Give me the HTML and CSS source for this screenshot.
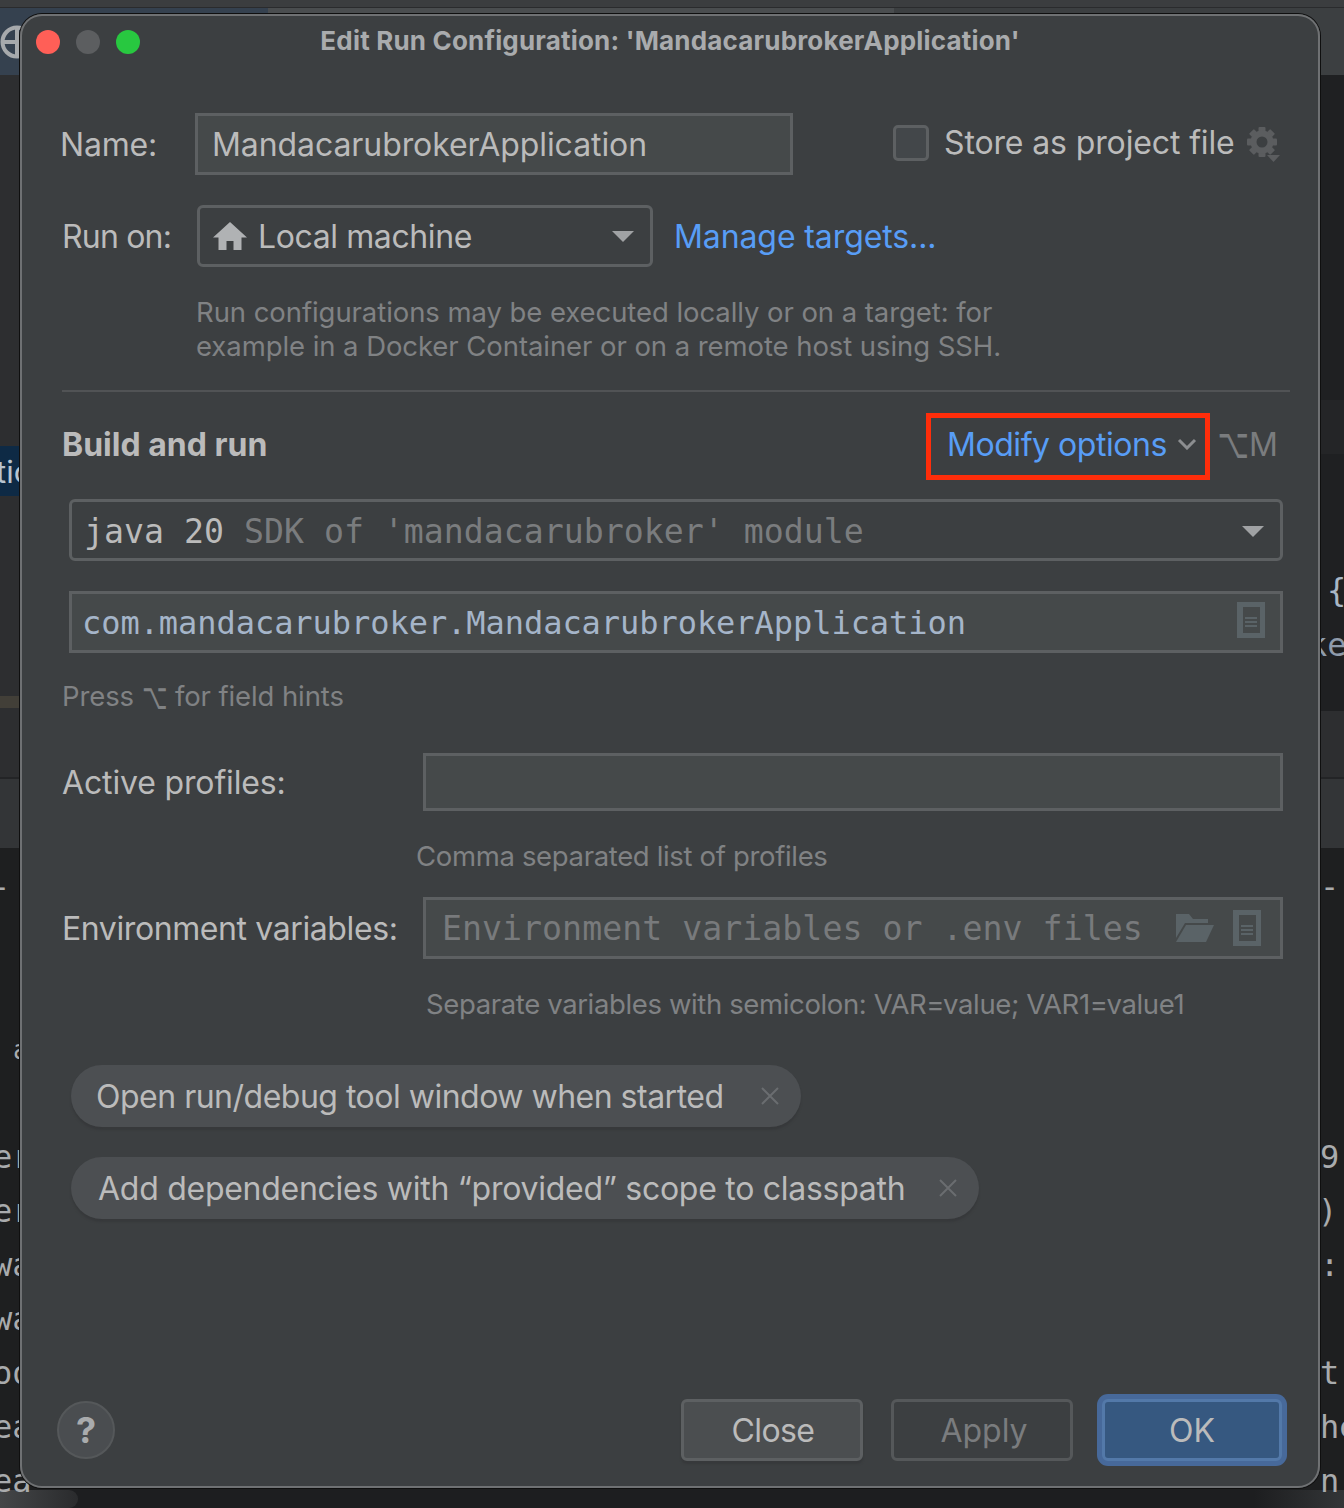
FILE: index.html
```html
<!DOCTYPE html>
<html>
<head>
  <meta charset="utf-8">
  <title>Edit Run Configuration</title>
  <link rel="stylesheet" href="styles.css">
</head>
<body>
  <!-- IDE window behind the dialog -->
  <div class="ide">
    <div class="band band-top"></div>
    <div class="band band-tabs">
      <div class="tab-active"></div>
      <div class="tab-next"></div>
    </div>
    <div class="band band-tree">
      <div class="side-left">
        <div class="tree-selected"></div>
        <div class="tree-warn"></div>
      </div>
      <div class="side-right">
        <div class="gutter-line"></div>
      </div>
    </div>
    <div class="band band-panel"></div>
    <div class="band band-console"></div>
    <div class="band band-bottom">
      <div class="scroll-left"></div>
      <div class="scroll-right"></div>
    </div>
    <svg class="globe" width="34" height="34" viewBox="0 0 34 34">
      <circle cx="17" cy="17" r="14.5" fill="none" stroke="#a6a9ac" stroke-width="4"/>
      <path d="M17 3v28M3 17h28" stroke="#a6a9ac" stroke-width="4"/>
    </svg>
    <span class="frag frag-ti">tic</span>
    <span class="frag frag-dash-l">-</span>
    <span class="frag frag-a">a</span>
    <span class="frag frag-e1">er</span>
    <span class="frag frag-e2">er</span>
    <span class="frag frag-w1">wa</span>
    <span class="frag frag-w2">wa</span>
    <span class="frag frag-o">oo</span>
    <span class="frag frag-e3">ea</span>
    <span class="frag frag-e4">ea</span>
    <span class="frag frag-brace">{</span>
    <span class="frag frag-ke">ke</span>
    <span class="frag frag-dash-r">-</span>
    <span class="frag frag-9">9</span>
    <span class="frag frag-paren">)</span>
    <span class="frag frag-colon">:r</span>
    <span class="frag frag-t">t</span>
    <span class="frag frag-h">he</span>
    <span class="frag frag-n">n</span>
  </div>

  <div class="dialog">
    <div class="titlebar">
      <div class="lights">
        <span class="light light-red"></span>
        <span class="light light-grey"></span>
        <span class="light light-green"></span>
      </div>
      <div class="title">Edit Run Configuration: 'MandacarubrokerApplication'</div>
    </div>

    <div class="row row-name">
      <label class="label label-name">Name:</label>
      <div class="field field-name">MandacarubrokerApplication</div>
      <span class="checkbox"></span>
      <span class="store-text">Store as project file</span>
      <svg class="gear" width="36" height="38" viewBox="0 0 36 38">
        <g fill="#5b5d5f">
          <rect x="12.5" y="1" width="7" height="30" rx="1"/>
          <rect x="12.5" y="1" width="7" height="30" rx="1" transform="rotate(45 16 16)"/>
          <rect x="12.5" y="1" width="7" height="30" rx="1" transform="rotate(90 16 16)"/>
          <rect x="12.5" y="1" width="7" height="30" rx="1" transform="rotate(135 16 16)"/>
          <circle cx="16" cy="16" r="11.5"/>
          <path d="M21 29h13l-6.500 7z"/>
        </g>
        <circle cx="16" cy="16" r="5.500" fill="#3c3f41"/>
      </svg>
    </div>

    <div class="row row-run">
      <label class="label label-run">Run on:</label>
      <div class="combo combo-run">
        <svg class="house" width="34" height="30" viewBox="0 0 34 30">
          <path d="M17 1L34 16.500H28.500V29H20.500V20H13.500V29H5.500V16.500H0z" fill="#b0b2b4"/>
        </svg>
        <span class="combo-text">Local machine</span>
        <span class="caret"></span>
      </div>
      <a class="link manage-link">Manage targets...</a>
    </div>

    <div class="hint hint-run">Run configurations may be executed locally or on a target: for<br>example in a Docker Container or on a remote host using SSH.</div>

    <div class="divider"></div>

    <div class="row row-build">
      <div class="section-title">Build and run</div>
      <div class="modify-box">
        <a class="link modify-link">Modify options</a>
        <svg class="chevron" width="20" height="12" viewBox="0 0 20 12">
          <path d="M2 2l8 8 8-8" fill="none" stroke="#8c8e90" stroke-width="3"/>
        </svg>
      </div>
      <span class="shortcut"><span class="opt">⌥</span>M</span>
    </div>

    <div class="combo combo-jdk mono">
      <span class="jdk-name">java 20</span>&nbsp;<span class="jdk-rest">SDK of 'mandacarubroker' module</span>
      <span class="caret"></span>
    </div>

    <div class="field field-main mono">
      <span>com.mandacarubroker.MandacarubrokerApplication</span>
      <svg class="doc" width="28" height="36" viewBox="0 0 28 36">
        <path fill-rule="evenodd" d="M0 0h28v36H0zM6 5v26h17V5z" fill="#5a6367"/>
        <path d="M8 15h12v2H8zM8 19h12v2H8zM8 23h12v2H8z" fill="#5a6367"/>
      </svg>
    </div>

    <div class="hint hint-press">Press <span class="opt">⌥</span> for field hints</div>

    <div class="row row-profiles">
      <label class="label label-wide label-profiles">Active profiles:</label>
      <div class="field field-profiles"></div>
    </div>
    <div class="hint hint-comma">Comma separated list of profiles</div>

    <div class="row row-env">
      <label class="label label-wide label-env">Environment variables:</label>
      <div class="field field-env mono">
        <span class="placeholder">Environment variables or .env files</span>
        <svg class="folder" width="38" height="28" viewBox="0 0 38 28">
          <path d="M0 0h13l4 5h15v4H9L0 24z" fill="#5a6367"/>
          <path d="M10 11h28l-8 17H0z" fill="#5a6367"/>
        </svg>
        <svg class="doc" width="28" height="36" viewBox="0 0 28 36">
          <path fill-rule="evenodd" d="M0 0h28v36H0zM6 5v26h17V5z" fill="#5a6367"/>
          <path d="M8 15h12v2H8zM8 19h12v2H8zM8 23h12v2H8z" fill="#5a6367"/>
        </svg>
      </div>
    </div>
    <div class="hint hint-sep">Separate variables with semicolon: VAR=value; VAR1=value1</div>

    <div class="chip chip-open">
      <span>Open run/debug tool window when started</span>
      <svg class="chip-x" width="20" height="20" viewBox="0 0 20 20">
        <path d="M2 2l16 16M18 2L2 18" stroke="#6a6d70" stroke-width="2"/>
      </svg>
    </div>
    <div class="chip chip-deps">
      <span>Add dependencies with “provided” scope to classpath</span>
      <svg class="chip-x" width="20" height="20" viewBox="0 0 20 20">
        <path d="M2 2l16 16M18 2L2 18" stroke="#6a6d70" stroke-width="2"/>
      </svg>
    </div>

    <div class="footer">
      <div class="help">?</div>
      <div class="btn btn-close">Close</div>
      <div class="btn btn-apply">Apply</div>
      <div class="btn btn-ok">OK</div>
    </div>
  </div>
</body>
</html>
```

FILE: styles.css
```css
/* Page */
body {
  margin: 0;
  width: 1344px;
  height: 1508px;
  position: relative;
  overflow: hidden;
  background-color: #1e1f20;
  font-family: Inter, "Noto Sans", sans-serif;
  font-size: 32px;
  color: #bbbbbb;
}

/* IDE behind the dialog */
.ide {
  position: absolute;
  inset: 0;
  display: flex;
  flex-direction: column;
}
.band { position: relative; }
.band-top {
  height: 7px;
  background-color: #3b3d3f;
  border-bottom: 1px solid #2a2b2d;
}
.band-tabs {
  height: 67px;
  display: flex;
  background-color: #3c3f41;
}
.tab-active {
  width: 268px;
  height: 100%;
  background-color: #35414f;
}
.tab-next {
  width: 626px;
  height: 100%;
  background-color: #4a4d4f;
}
.band-tree {
  height: 636px;
  display: flex;
  justify-content: space-between;
  background-color: #1f2022;
}
.side-left {
  width: 20px;
  background-color: #2d2e30;
  padding-top: 371px;
}
.tree-selected {
  height: 50px;
  background-color: #0e2a45;
}
.tree-warn {
  height: 12px;
  margin-top: 200px;
  background-color: #423f38;
}
.side-right { width: 24px; padding-top: 325px; }
.gutter-line {
  height: 54px;
  background-color: #242527;
}
.band-panel {
  height: 137px;
  background-color: #2d2e30;
  background-image: linear-gradient(#2d2e30 66px, #232426 66px, #232426 68px, #333537 68px);
}
.band-console {
  height: 642px;
  background-color: #1e1f20;
}
.band-bottom {
  flex: 1;
  background-color: #1d1e20;
}
.scroll-left {
  position: absolute;
  left: 0;
  top: 0;
  width: 78px;
  height: 100%;
  border-radius: 0 9px 9px 0;
  background-image: linear-gradient(to right, #444648, #2a2b2d);
}
.scroll-right {
  position: absolute;
  right: 0;
  top: 0;
  width: 90px;
  height: 100%;
  background-image: linear-gradient(to right, #1d1e20, #333537);
}
.globe {
  position: absolute;
  left: 0;
  top: 25px;
}
.frag {
  position: absolute;
  font-family: "DejaVu Sans Mono", monospace;
  font-size: 32px;
  line-height: 40px;
  color: #a9abad;
  white-space: nowrap;
}
.frag-ti {
  left: -4px;
  top: 452px;
  font-family: Inter, sans-serif;
  font-size: 31px;
  color: #b9c4cf;
}
.frag-dash-l { left: -9px; top: 867px; }
.frag-a { left: 13px; top: 1030px; font-size: 26px; }
.frag-e1 { left: -7px; top: 1137px; }
.frag-e2 { left: -7px; top: 1191px; }
.frag-w1 { left: -7px; top: 1245px; }
.frag-w2 { left: -7px; top: 1299px; }
.frag-o { left: -7px; top: 1353px; }
.frag-e3 { left: -7px; top: 1407px; }
.frag-e4 { left: -7px; top: 1461px; }
.frag-brace { left: 1327px; top: 570px; color: #a9b7c6; }
.frag-ke { left: 1308px; top: 625px; color: #8f9bab; }
.frag-dash-r { left: 1320px; top: 867px; }
.frag-9 { left: 1320px; top: 1137px; }
.frag-paren { left: 1318px; top: 1191px; }
.frag-colon { left: 1320px; top: 1245px; }
.frag-t { left: 1320px; top: 1353px; }
.frag-h { left: 1320px; top: 1407px; }
.frag-n { left: 1320px; top: 1461px; }

/* Dialog */
.dialog {
  position: absolute;
  left: 20px;
  top: 14px;
  width: 1300px;
  height: 1474px;
  display: flex;
  flex-direction: column;
  border-radius: 22px;
  background-color: #3c3f41;
  box-shadow: inset 0 0 0 2px #6f7173, 0 0 0 1px #0f0f0f;
}
.titlebar {
  height: 56px;
  flex: none;
  display: flex;
  align-items: center;
  justify-content: center;
  position: relative;
}
.lights {
  position: absolute;
  left: 16px;
  top: 16px;
  display: flex;
  gap: 16px;
}
.light {
  width: 24px;
  height: 24px;
  border-radius: 50%;
}
.light-red { background-color: #ff5f57; }
.light-grey { background-color: #5c5e60; }
.light-green { background-color: #28c840; }
.title {
  margin-top: -4px;
  font-size: 26px;
  font-weight: 700;
  letter-spacing: 0.18px;
  color: #a9abad;
}

.row {
  display: flex;
  align-items: center;
  flex: none;
}
.label { flex: none; }
.field {
  box-sizing: border-box;
  border: 3px solid #5d6062;
  background-color: #45494a;
  display: flex;
  align-items: center;
  justify-content: space-between;
}
.combo {
  box-sizing: border-box;
  border: 3px solid #5d6062;
  border-radius: 6px;
  display: flex;
  align-items: center;
}
.caret {
  width: 0;
  height: 0;
  margin-left: auto;
  border-left: 11px solid transparent;
  border-right: 11px solid transparent;
  border-top: 11px solid #a0a2a4;
}
.mono {
  font-family: "DejaVu Sans Mono", monospace;
  font-size: 32px;
  letter-spacing: -0.05px;
  white-space: pre;
}

/* Name row */
.row-name { margin-top: 43px; height: 62px; }
.label-name { margin-left: 40px; width: 135px; letter-spacing: -0.2px; }
.field-name {
  width: 598px;
  height: 62px;
  padding-left: 14px;
  letter-spacing: -0.08px;
}
.checkbox {
  box-sizing: border-box;
  width: 36px;
  height: 36px;
  margin-left: 100px;
  margin-top: -2px;
  border: 3px solid #5d6062;
  border-radius: 5px;
  background-color: #43474a;
}
.store-text {
  margin-left: 15px;
  margin-top: -4px;
  letter-spacing: -0.13px;
}
.gear { margin-left: 11px; margin-top: 2px; }

/* Run on row */
.row-run { margin-top: 30px; height: 62px; }
.label-run { margin-left: 42px; width: 135px; letter-spacing: -0.8px; }
.combo-run {
  width: 456px;
  height: 62px;
  padding: 0 16px 0 13px;
}
.combo-text { margin-left: 11px; letter-spacing: -0.4px; }
.link { color: #589df6; }
.manage-link { margin-left: 21px; letter-spacing: -0.1px; }

.hint {
  flex: none;
  font-size: 27.5px;
  line-height: 34px;
  color: #808284;
}
.hint .opt {
  display: inline-block;
  margin: 0 -3px;
  transform: scale(0.8, 1.3);
}
.hint-run { margin: 28px 0 0 176px; letter-spacing: -0.07px; }
.divider {
  flex: none;
  height: 2px;
  width: 1228px;
  margin: 27px 0 0 42px;
  background-color: #515355;
}

/* Build and run */
.row-build { margin-top: 21px; height: 67px; padding-right: 42px; }
.section-title {
  margin-left: 42px;
  margin-bottom: 4px;
  font-weight: 700;
}
.modify-box {
  box-sizing: border-box;
  width: 284px;
  height: 67px;
  margin-left: auto;
  padding-left: 16px;
  border: 5px solid #ff2d0a;
  display: flex;
  align-items: center;
}
.modify-link { margin-bottom: 4px; letter-spacing: -0.45px; }
.chevron { margin: 0 0 5px 10px; }
.shortcut {
  width: 57px;
  margin-left: 11px;
  margin-bottom: 4px;
  display: flex;
  justify-content: flex-end;
  color: #7a7c7e;
}
.opt { font-family: "DejaVu Sans", sans-serif; }
.shortcut .opt {
  transform: scale(0.85, 1.3);
  transform-origin: right center;
}
.combo-jdk {
  flex: none;
  width: 1214px;
  height: 62px;
  margin: 19px 0 0 49px;
  padding: 2px 16px 0 12px;
  font-size: 33.2px;
  letter-spacing: 0.01px;
}
.jdk-rest { color: #7a7c7e; }
.field-main {
  flex: none;
  width: 1214px;
  height: 62px;
  margin: 30px 0 0 49px;
  padding: 2px 15px 0 10px;
  color: #a5b5c9;
}
.field-main .doc { margin-top: -6px; }
.hint-press { margin: 26px 0 0 42px; letter-spacing: -0.1px; }

/* Spring Boot fields */
.row-profiles { margin-top: 40px; height: 58px; }
.label-wide { margin-left: 42px; width: 361px; }
.label-profiles { letter-spacing: -0.15px; }
.label-env { letter-spacing: -0.4px; }
.field-profiles { width: 860px; height: 58px; }
.hint-comma { margin: 28px 0 0 396px; letter-spacing: -0.34px; }
.row-env { margin-top: 24px; height: 62px; }
.field-env {
  width: 860px;
  height: 62px;
  padding: 0 19px 0 16px;
  justify-content: flex-start;
  font-size: 33.2px;
  letter-spacing: 0.04px;
}
.placeholder { color: #787a7c; }
.folder { margin-left: auto; }
.field-env .doc { margin-left: 19px; }
.hint-sep { margin: 28px 0 0 406px; letter-spacing: -0.37px; }

/* Chips */
.chip {
  box-sizing: border-box;
  flex: none;
  height: 62px;
  margin-left: 51px;
  border-radius: 31px;
  background-color: #4c4f52;
  box-shadow: 0 3px 2px #37393b;
  display: flex;
  align-items: center;
  justify-content: space-between;
}
.chip-open {
  width: 730px;
  margin-top: 44px;
  padding: 0 21px 0 25px;
  letter-spacing: -0.5px;
}
.chip-deps {
  width: 908px;
  margin-top: 30px;
  padding: 0 21px 0 27px;
  letter-spacing: -0.27px;
}

/* Footer */
.footer {
  margin-top: auto;
  margin-bottom: 27px;
  padding: 0 38px 0 37px;
  height: 62px;
  flex: none;
  display: flex;
  align-items: center;
}
.help {
  box-sizing: border-box;
  width: 58px;
  height: 58px;
  margin-right: auto;
  border: 2px solid #55585a;
  border-radius: 50%;
  background-color: #4a4d50;
  display: flex;
  align-items: center;
  justify-content: center;
  font-size: 36px;
  font-weight: 700;
  color: #a9abad;
}
.btn {
  box-sizing: border-box;
  width: 182px;
  height: 62px;
  border: 3px solid #5d6062;
  border-radius: 6px;
  display: flex;
  align-items: center;
  justify-content: center;
}
.btn-close {
  padding-left: 2px;
  letter-spacing: -0.6px;
  background-color: #4b4e50;
  box-shadow: 0 3px 2px #37393b;
}
.btn-apply {
  margin-left: 28px;
  padding-left: 4px;
  border-color: #55585a;
  color: #7a7c7e;
}
.btn-ok {
  width: 180px;
  margin-left: 29px;
  border-color: #5379a9;
  background-color: #365880;
  box-shadow: 0 0 0 5px #47699a;
}
```
